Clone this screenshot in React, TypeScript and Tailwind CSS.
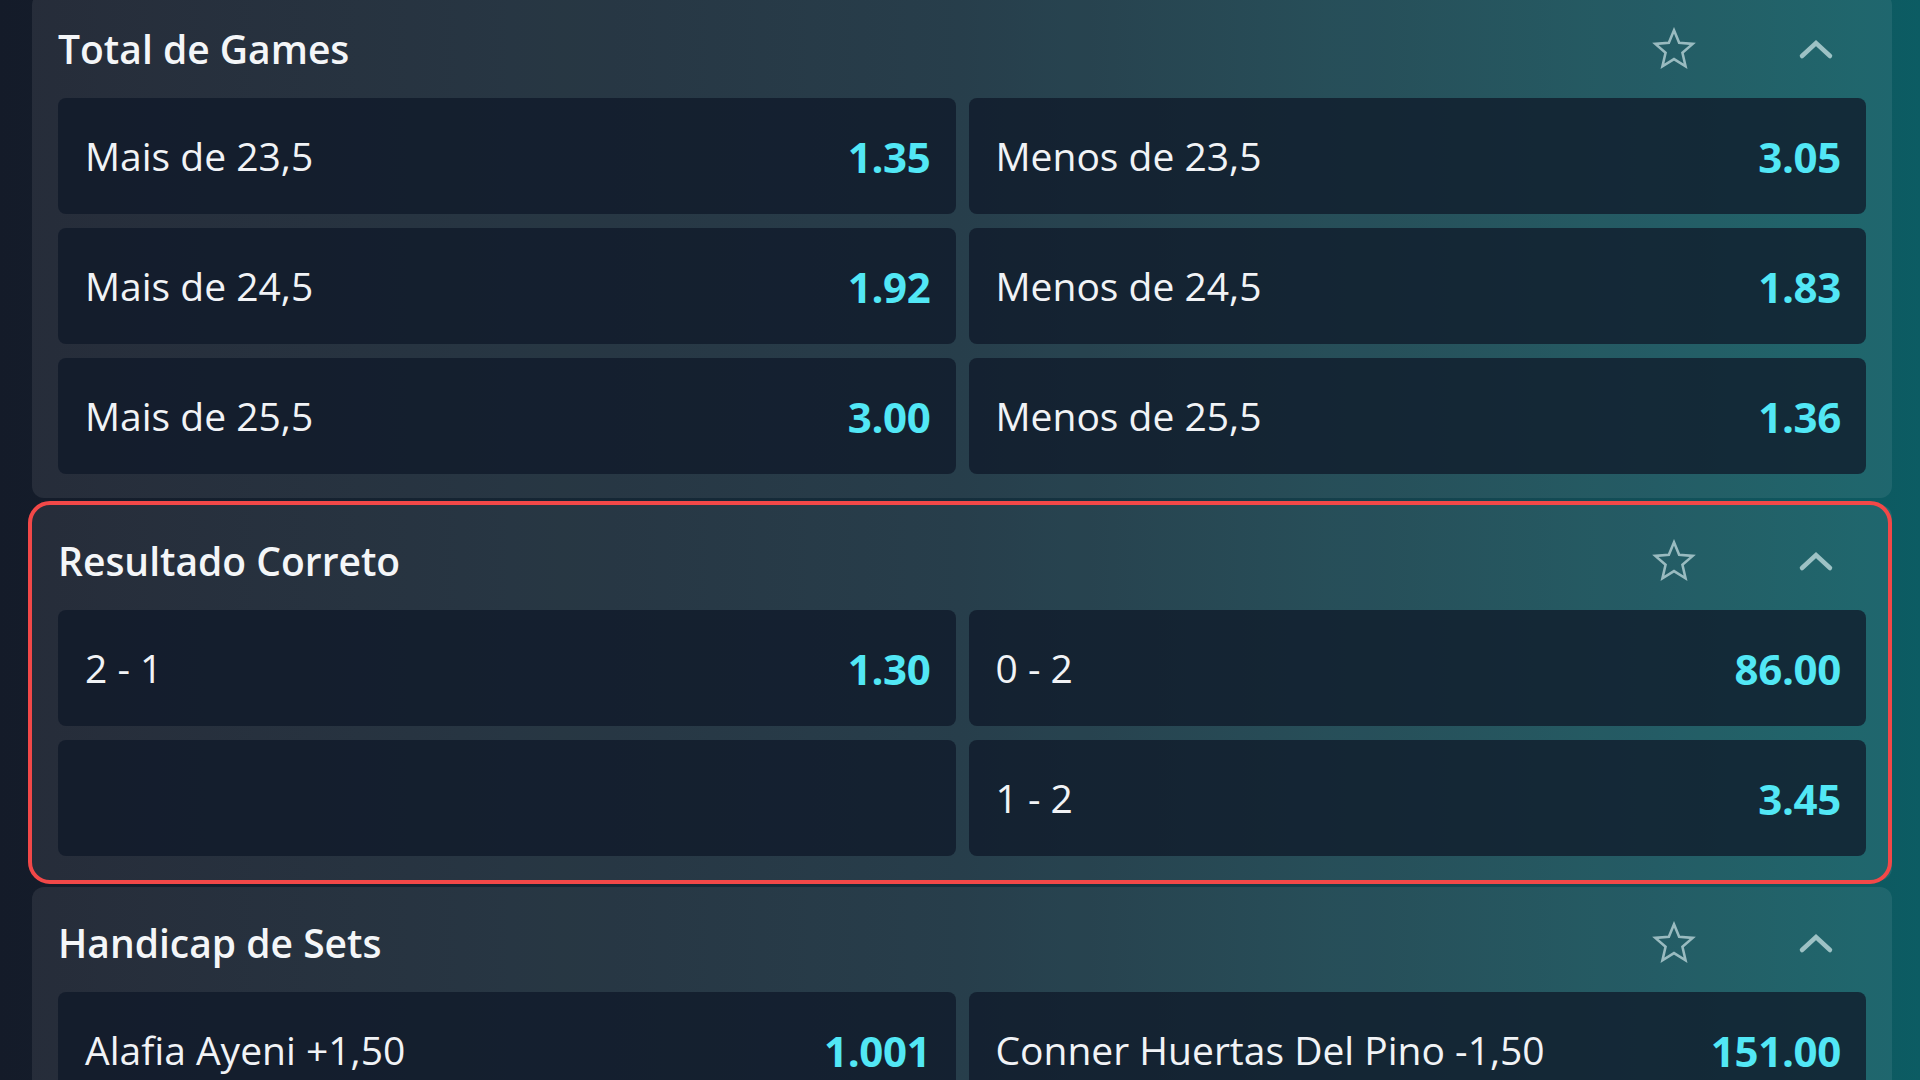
import React from "react";

type Pick = { label: string; odd: string } | null;

type Market = {
  title: string;
  highlighted?: boolean;
  rows: [Pick, Pick][];
};

const markets: Market[] = [
  {
    title: "Total de Games",
    rows: [
      [
        { label: "Mais de 23,5", odd: "1.35" },
        { label: "Menos de 23,5", odd: "3.05" },
      ],
      [
        { label: "Mais de 24,5", odd: "1.92" },
        { label: "Menos de 24,5", odd: "1.83" },
      ],
      [
        { label: "Mais de 25,5", odd: "3.00" },
        { label: "Menos de 25,5", odd: "1.36" },
      ],
    ],
  },
  {
    title: "Resultado Correto",
    highlighted: true,
    rows: [
      [
        { label: "2 - 1", odd: "1.30" },
        { label: "0 - 2", odd: "86.00" },
      ],
      [null, { label: "1 - 2", odd: "3.45" }],
    ],
  },
  {
    title: "Handicap de Sets",
    rows: [
      [
        { label: "Alafia Ayeni +1,50", odd: "1.001" },
        { label: "Conner Huertas Del Pino -1,50", odd: "151.00" },
      ],
    ],
  },
];

function StarIcon() {
  return (
    <svg width="46" height="44" viewBox="0 0 24 24" fill="none">
      <polygon
        points="12,1.8 14.8,8.6 22.2,9.2 16.6,14 18.3,21.4 12,17.5 5.7,21.4 7.4,14 1.8,9.2 9.2,8.6"
        stroke="rgba(210,232,235,0.68)"
        strokeWidth="1.4"
        strokeLinejoin="miter"
      />
    </svg>
  );
}

function ChevronUp() {
  return (
    <svg width="36" height="22" viewBox="0 0 36 22" fill="none">
      <polyline
        points="4,18 18,5 32,18"
        stroke="rgba(205,230,232,0.72)"
        strokeWidth="4.5"
        strokeLinecap="round"
        strokeLinejoin="miter"
      />
    </svg>
  );
}

function PickCard({ pick }: { pick: Pick }) {
  return (
    <div className="flex h-[116px] items-center justify-between rounded-[8px] bg-[#0f1828]/75 pl-[27px] pr-[25px]">
      {pick && (
        <>
          <span className="text-[39px] text-[#f1f3f6]">{pick.label}</span>
          <span className="text-[42px] font-bold tracking-[-0.3px] text-[#52e7f5]">{pick.odd}</span>
        </>
      )}
    </div>
  );
}

function MarketPanel({ market }: { market: Market }) {
  return (
    <div className="relative rounded-[12px] bg-white/[0.08] px-[26px] pb-[24px] pt-[26px]">
      {market.highlighted && (
        <div className="pointer-events-none absolute -bottom-[4px] -left-[4px] -top-[4px] right-0 rounded-[22px] border-[4px] border-[#f24848]" />
      )}
      <div className="mb-[19px] flex h-[60px] items-center">
        <h2 className="flex-1 text-[39px] font-semibold text-[#f4f6f8]">
          {market.title}
        </h2>
        <StarIcon />
        <div className="ml-[101px] mr-[32px]">
          <ChevronUp />
        </div>
      </div>
      <div className="flex flex-col gap-[14px]">
        {market.rows.map((row, i) => (
          <div key={i} className="grid grid-cols-2 gap-[13px]">
            <PickCard pick={row[0]} />
            <PickCard pick={row[1]} />
          </div>
        ))}
      </div>
    </div>
  );
}

export default function App() {
  return (
    <div
      className="h-[1080px] w-full overflow-hidden bg-gradient-to-r from-[#141b29] via-[#152e3c] to-[#0c5c63]"
      style={{ fontFamily: '"Open Sans", "Noto Sans", sans-serif' }}
    >
      <div className="-mt-[7px] flex flex-col gap-[7px] pl-[32px] pr-[28px]">
        {markets.map((m) => (
          <MarketPanel key={m.title} market={m} />
        ))}
      </div>
    </div>
  );
}
